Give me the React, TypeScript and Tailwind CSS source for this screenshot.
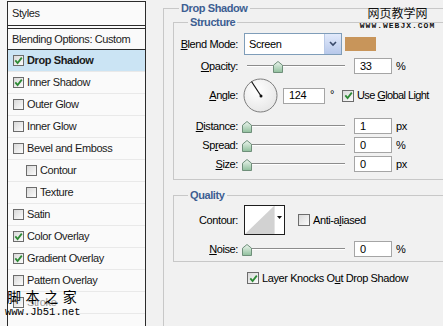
import React from "react";

const styleRows = [
  { label: "Drop Shadow", on: true, sel: true },
  { label: "Inner Shadow", on: true },
  { label: "Outer Glow" },
  { label: "Inner Glow" },
  { label: "Bevel and Emboss" },
  { label: "Contour", indent: true },
  { label: "Texture", indent: true },
  { label: "Satin" },
  { label: "Color Overlay", on: true },
  { label: "Gradient Overlay", on: true },
  { label: "Pattern Overlay" },
  { label: "Stroke" },
];

function Check({ on, big }: { on?: boolean; big?: boolean }) {
  return (
    <span
      className={`${big ? "w-[12px] h-[12px]" : "w-[11px] h-[11px]"} shrink-0 border border-[#6c6c6c] bg-gradient-to-br from-[#d9d9d9] to-[#fcfcfc] flex items-center justify-center`}
    >
      {on && (
        <svg width="9" height="9" viewBox="0 0 9 9">
          <path d="M1.3 4.3 L3.6 7 L7.8 1.6" stroke="#2d8a35" strokeWidth="1.8" fill="none" />
        </svg>
      )}
    </span>
  );
}

function Thumb() {
  return (
    <svg width="10" height="12" viewBox="0 0 10 12">
      <defs>
        <linearGradient id="tg" x1="0" y1="0" x2="0" y2="1">
          <stop offset="0" stopColor="#eef6ef" />
          <stop offset="1" stopColor="#8fbf9c" />
        </linearGradient>
      </defs>
      <path d="M5 0.5 L9.5 4.2 L9.5 11.5 L0.5 11.5 L0.5 4.2 Z" fill="url(#tg)" stroke="#6f8f7a" />
    </svg>
  );
}

function Slider({ value }: { value: number }) {
  const left = 3 + value * 94 - 5;
  return (
    <div className="relative w-[101px] h-[16px] shrink-0">
      <div className="absolute left-[3px] right-0 top-[7px] h-[1px] bg-[#8c8c8c]" />
      <div className="absolute left-[3px] right-0 top-[8px] h-[1px] bg-white" />
      <div className="absolute top-[3px]" style={{ left }}>
        <Thumb />
      </div>
    </div>
  );
}

function Field({ value, w = "w-[38px]" }: { value: string; w?: string }) {
  return (
    <div className={`${w} h-[16px] shrink-0 border border-[#a5a5a5] bg-white pl-[5px] flex items-center leading-none`}>
      {value}
    </div>
  );
}

function Label({ children }: { children: React.ReactNode }) {
  return <div className="w-[64px] shrink-0 text-right">{children}</div>;
}

function Dial() {
  return (
    <svg width="35" height="35" viewBox="0 0 35 35" className="shrink-0">
      <defs>
        <radialGradient id="dg" cx="0.4" cy="0.35" r="0.7">
          <stop offset="0" stopColor="#ffffff" />
          <stop offset="1" stopColor="#e6e6e6" />
        </radialGradient>
      </defs>
      <circle cx="17.5" cy="17.5" r="16.5" fill="url(#dg)" stroke="#7d7d7d" />
      <line x1="18" y1="18" x2="8.5" y2="3.5" stroke="#111" strokeWidth="1.2" />
      <circle cx="18" cy="18" r="1.5" fill="#111" />
    </svg>
  );
}

export default function App() {
  return (
    <div className="relative flex w-[443px] h-[326px] overflow-hidden bg-[#f1f1f1] text-[11px] tracking-[-0.4px] text-black font-['Liberation_Sans',Arial,sans-serif]">
      {/* styles list */}
      <div className="w-[146px] shrink-0 pl-[7px] pt-[1px] bg-[#f6f6f6]">
        <div className="h-full border-x border-t border-[#2b2b2b] bg-[#fafafa] text-[#1a1a1a]">
          <div className="h-[24px] flex items-center pl-[4px] border-b border-[#2b2b2b]">Styles</div>
          <div className="h-[22px] mt-[2px] flex items-center pl-[4px] border-y border-[#2b2b2b]">
            Blending Options: Custom
          </div>
          {styleRows.map((r) => (
            <div
              key={r.label}
              className={`h-[22px] flex items-center gap-[3px] border-b border-[#e9e9e9] ${r.indent ? "pl-[18px]" : "pl-[5px]"} ${r.sel ? "bg-[#cbe4f4] font-bold" : ""}`}
            >
              <Check on={r.on} />
              <span className={r.label === "Stroke" ? "text-[#9a9a9a]" : ""}>{r.label}</span>
            </div>
          ))}
        </div>
      </div>

      {/* settings */}
      <div className="flex-1 overflow-hidden">
        <fieldset className="ml-[17px] mt-[2px] w-[320px] min-h-[400px] border border-[#c8c8c8] pl-[9px]">
          <legend className="ml-[6px] px-[2px] leading-[13px] font-bold text-[#3d5e92]">Drop Shadow</legend>

          <fieldset className="mt-[1px] border border-[#c8c8c8] pb-[7px]">
            <legend className="ml-[14px] px-[2px] leading-[13px] font-bold text-[#3d5e92]">Structure</legend>

            <div className="mt-[4px] flex items-center">
              <Label>
                <u>B</u>lend Mode:
              </Label>
              <div className="ml-[6px] w-[98px] h-[22px] border border-[#7f9db9] bg-white flex items-center">
                <span className="flex-1 pl-[4px]">Screen</span>
                <div className="w-[17px] h-full border-l border-[#b9c9e6] bg-gradient-to-b from-[#e2eafb] to-[#b7c8ea] flex items-center justify-center">
                  <svg width="8" height="6" viewBox="0 0 8 6">
                    <path d="M1 1 L4 4 L7 1" stroke="#3a4a6a" strokeWidth="1.6" fill="none" />
                  </svg>
                </div>
              </div>
              <div className="ml-[3px] w-[31px] h-[14px] bg-[#c8955a]" />
            </div>

            <div className="mt-[3px] flex items-center h-[16px]">
              <Label>
                <u>O</u>pacity:
              </Label>
              <div className="ml-[6px]">
                <Slider value={0.33} />
              </div>
              <div className="ml-[9px]">
                <Field value="33" />
              </div>
              <span className="ml-[4px]">%</span>
            </div>

            <div className="mt-[4px] flex items-center">
              <Label>
                <u>A</u>ngle:
              </Label>
              <div className="ml-[5px]">
                <Dial />
              </div>
              <div className="ml-[5px]">
                <Field value="124" w="w-[42px]" />
              </div>
              <span className="ml-[5px] self-start mt-[8px]">°</span>
              <div className="ml-[8px] flex items-center gap-[3px]">
                <Check on big />
                <span className="tracking-[-0.6px]">
                  Use <u>G</u>lobal Light
                </span>
              </div>
            </div>

            {[
              { l: <><u>D</u>istance:</>, v: "1", u: "px" },
              { l: <>Sp<u>r</u>ead:</>, v: "0", u: "%" },
              { l: <><u>S</u>ize:</>, v: "0", u: "px" },
            ].map((row, i) => (
              <div key={i} className={`${i === 0 ? "mt-[5px]" : "mt-[3px]"} flex items-center h-[16px]`}>
                <Label>{row.l}</Label>
                <div className="ml-[6px]">
                  <Slider value={0} />
                </div>
                <div className="ml-[9px]">
                  <Field value={row.v} />
                </div>
                <span className="ml-[4px]">{row.u}</span>
              </div>
            ))}
          </fieldset>

          <fieldset className="mt-[9px] border border-[#c8c8c8] pb-[4px]">
            <legend className="ml-[14px] px-[2px] leading-[13px] font-bold text-[#3d5e92]">Quality</legend>

            <div className="mt-[3px] flex items-center">
              <Label>Contour:</Label>
              <div className="ml-[6px]">
                <svg width="41" height="30" viewBox="0 0 41 30">
                  <rect x="0.5" y="0.5" width="40" height="29" fill="#fff" stroke="#1e1e1e" />
                  <polygon points="1,29 30,1 30,29" fill="#d2d2d2" />
                  <line x1="30.5" y1="1" x2="30.5" y2="29" stroke="#e4e4e4" />
                  <polygon points="33,11 38,11 35.5,14" fill="#111" />
                </svg>
              </div>
              <div className="ml-[13px] flex items-center gap-[3px]">
                <Check big />
                <span>
                  Anti-a<u>l</u>iased
                </span>
              </div>
            </div>

            <div className="mt-[6px] flex items-center h-[16px]">
              <Label>
                <u>N</u>oise:
              </Label>
              <div className="ml-[6px]">
                <Slider value={0} />
              </div>
              <div className="ml-[9px]">
                <Field value="0" />
              </div>
              <span className="ml-[4px]">%</span>
            </div>
          </fieldset>

          <div className="mt-[8px] ml-[74px] flex items-center gap-[3px]">
            <Check on big />
            <span>
              Layer Knocks O<u>u</u>t Drop Shadow
            </span>
          </div>
        </fieldset>
      </div>

      {/* watermarks */}
      <div className="absolute left-[362px] top-[7px] w-[71px] flex flex-col items-center leading-none text-[#111]">
        <span className="text-[12px] tracking-[0px] font-['Noto_Sans_CJK_SC',sans-serif]">网页教学网</span>
        <span className="mt-[3px] text-[8px] font-bold tracking-[1px] font-['Liberation_Mono',monospace]">WWW.WEBJX.COM</span>
      </div>
      <div className="absolute left-[7px] top-[289px] flex flex-col leading-none text-black">
        <div className="flex gap-[5px] text-[14px] font-['Noto_Sans_CJK_SC',sans-serif]">
          <span>脚</span>
          <span>本</span>
          <span>之</span>
          <span>家</span>
        </div>
        <span className="mt-[4px] -ml-[2px] text-[10.5px] tracking-normal font-['Liberation_Mono',monospace]">www.Jb51.net</span>
      </div>
    </div>
  );
}
